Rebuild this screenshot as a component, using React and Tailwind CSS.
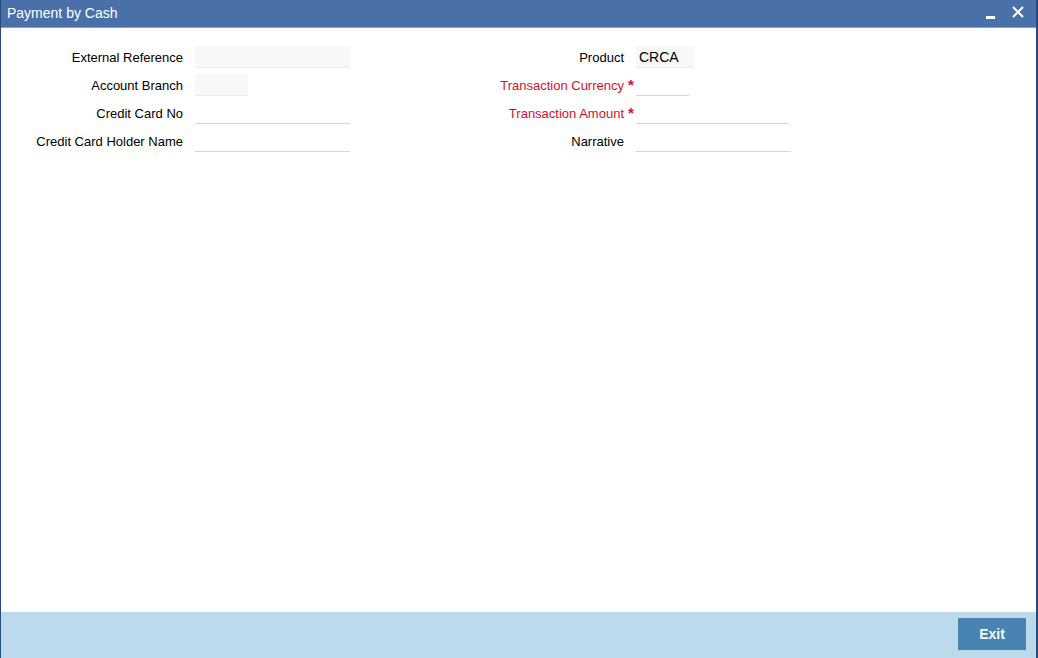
const leftFields = [
    { label: "External Reference", width: "w-[155px]", shaded: true },
    { label: "Account Branch", width: "w-[53px]", shaded: true },
    { label: "Credit Card No", width: "w-[155px]" },
    { label: "Credit Card Holder Name", width: "w-[155px]" },
];

const rightFields = [
    { label: "Product", width: "w-[58px]", shaded: true, value: "CRCA" },
    { label: "Transaction Currency", width: "w-[53px]", required: true },
    { label: "Transaction Amount", width: "w-[153px]", required: true },
    { label: "Narrative", width: "w-[155px]" },
];

const Field = ({ field, labelWidth }) => (
    <div className="flex items-center h-[28px]">
        <span className={`${labelWidth} text-right text-[13px] pt-[2px] ${field.required ? "text-[#d4112b]" : "text-black"}`}>
            {field.label}
        </span>
        <span className="w-[12px] pl-[4px] text-[#d4112b] text-[15px] font-bold leading-none self-start mt-[6px]">
            {field.required ? "*" : ""}
        </span>
        <div
            className={`${field.width} h-[22px] border-b border-[#d6d6d6] flex items-center px-[3px] pt-[2px] text-[14px] ${
                field.shaded ? "bg-[#f8f8f8] border-[#ececec]" : "bg-white"
            }`}
        >
            {field.value}
        </div>
    </div>
);

export default function App() {
    return (
        <div
            className="w-[1038px] h-[658px] flex flex-col bg-white border-l border-r-2 border-[#274b80] text-[14px]"
            style={{ fontFamily: '"Liberation Sans", Arial, sans-serif' }}
        >
            <div className="h-[28px] bg-[#4a70aa] border-b border-[#8aa0bd] flex items-center justify-between pl-[6px] pr-[12px] text-white">
                <span>Payment by Cash</span>
                <div className="flex items-center gap-[17px]">
                    <span className="w-[9px] h-[3px] bg-white mt-[8px]" />
                    <svg width="12" height="12" viewBox="0 0 12 12" className="-mt-[4px]">
                        <path d="M1 1 L11 11 M11 1 L1 11" stroke="white" strokeWidth="2" />
                    </svg>
                </div>
            </div>
            <div className="flex-1 flex pt-[15px]">
                <div className="w-[440px] flex flex-col">
                    {leftFields.map((f) => (
                        <Field key={f.label} field={f} labelWidth="w-[182px]" />
                    ))}
                </div>
                <div className="flex flex-col">
                    {rightFields.map((f) => (
                        <Field key={f.label} field={f} labelWidth="w-[183px]" />
                    ))}
                </div>
            </div>
            <div className="h-[46px] bg-[#bdd9ec] flex items-start justify-end pt-[6px] pr-[10px]">
                <button className="w-[68px] h-[32px] bg-[#4883b2] text-[#f4f8fb] font-bold">Exit</button>
            </div>
        </div>
    );
}
